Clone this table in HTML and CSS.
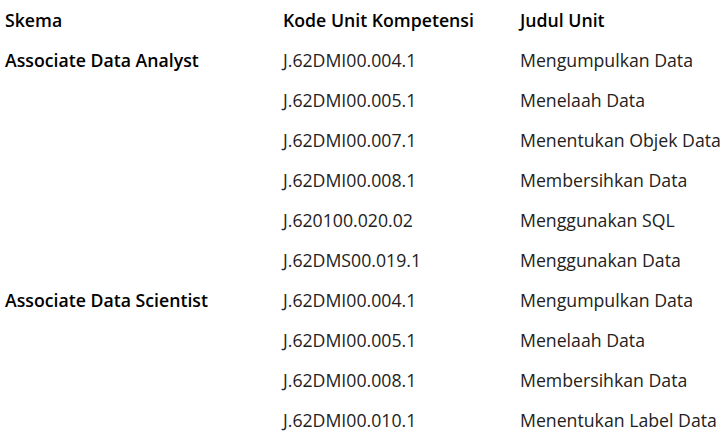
FILE: index.html
```html
<!DOCTYPE html>
<html>
<head>
<meta charset="utf-8">
<link rel="stylesheet" href="styles.css">
</head>
<body>
<table class="units">
  <thead>
    <tr><th class="c1">Skema</th><th class="c2">Kode Unit Kompetensi</th><th class="c3">Judul Unit</th></tr>
  </thead>
  <tbody>
    <tr><td class="skema">Associate Data Analyst</td><td>J.62DMI00.004.1</td><td>Mengumpulkan Data</td></tr>
    <tr><td></td><td>J.62DMI00.005.1</td><td>Menelaah Data</td></tr>
    <tr><td></td><td>J.62DMI00.007.1</td><td>Menentukan Objek Data</td></tr>
    <tr><td></td><td>J.62DMI00.008.1</td><td>Membersihkan Data</td></tr>
    <tr><td></td><td>J.620100.020.02</td><td>Menggunakan SQL</td></tr>
    <tr><td></td><td>J.62DMS00.019.1</td><td>Menggunakan Data</td></tr>
    <tr><td class="skema">Associate Data Scientist</td><td>J.62DMI00.004.1</td><td>Mengumpulkan Data</td></tr>
    <tr><td></td><td>J.62DMI00.005.1</td><td>Menelaah Data</td></tr>
    <tr><td></td><td>J.62DMI00.008.1</td><td>Membersihkan Data</td></tr>
    <tr><td></td><td>J.62DMI00.010.1</td><td>Menentukan Label Data</td></tr>
  </tbody>
</table>
</body>
</html>
```
FILE: styles.css
```css
html, body {
  margin: 0;
  padding: 0;
  background: #fff;
  overflow: hidden;
}
.units {
  border-collapse: collapse;
  font-family: "Open Sans", "Noto Sans", sans-serif;
  font-size: 17.7px;
  color: #222;
  white-space: nowrap;
  table-layout: fixed;
  width: 720px;
}
.units th, .units td {
  height: 40px;
  padding: 0;
  text-align: left;
  vertical-align: middle;
}
.units th {
  font-weight: 600;
  color: #000;
}
.units .c1 { width: 278px; padding-left: 5px; }
.units .c2 { width: 237px; }
.units .c3 { width: 200px; }
.units td:first-child { padding-left: 5px; }
.units .skema {
  font-weight: 600;
  color: #000;
}
```
